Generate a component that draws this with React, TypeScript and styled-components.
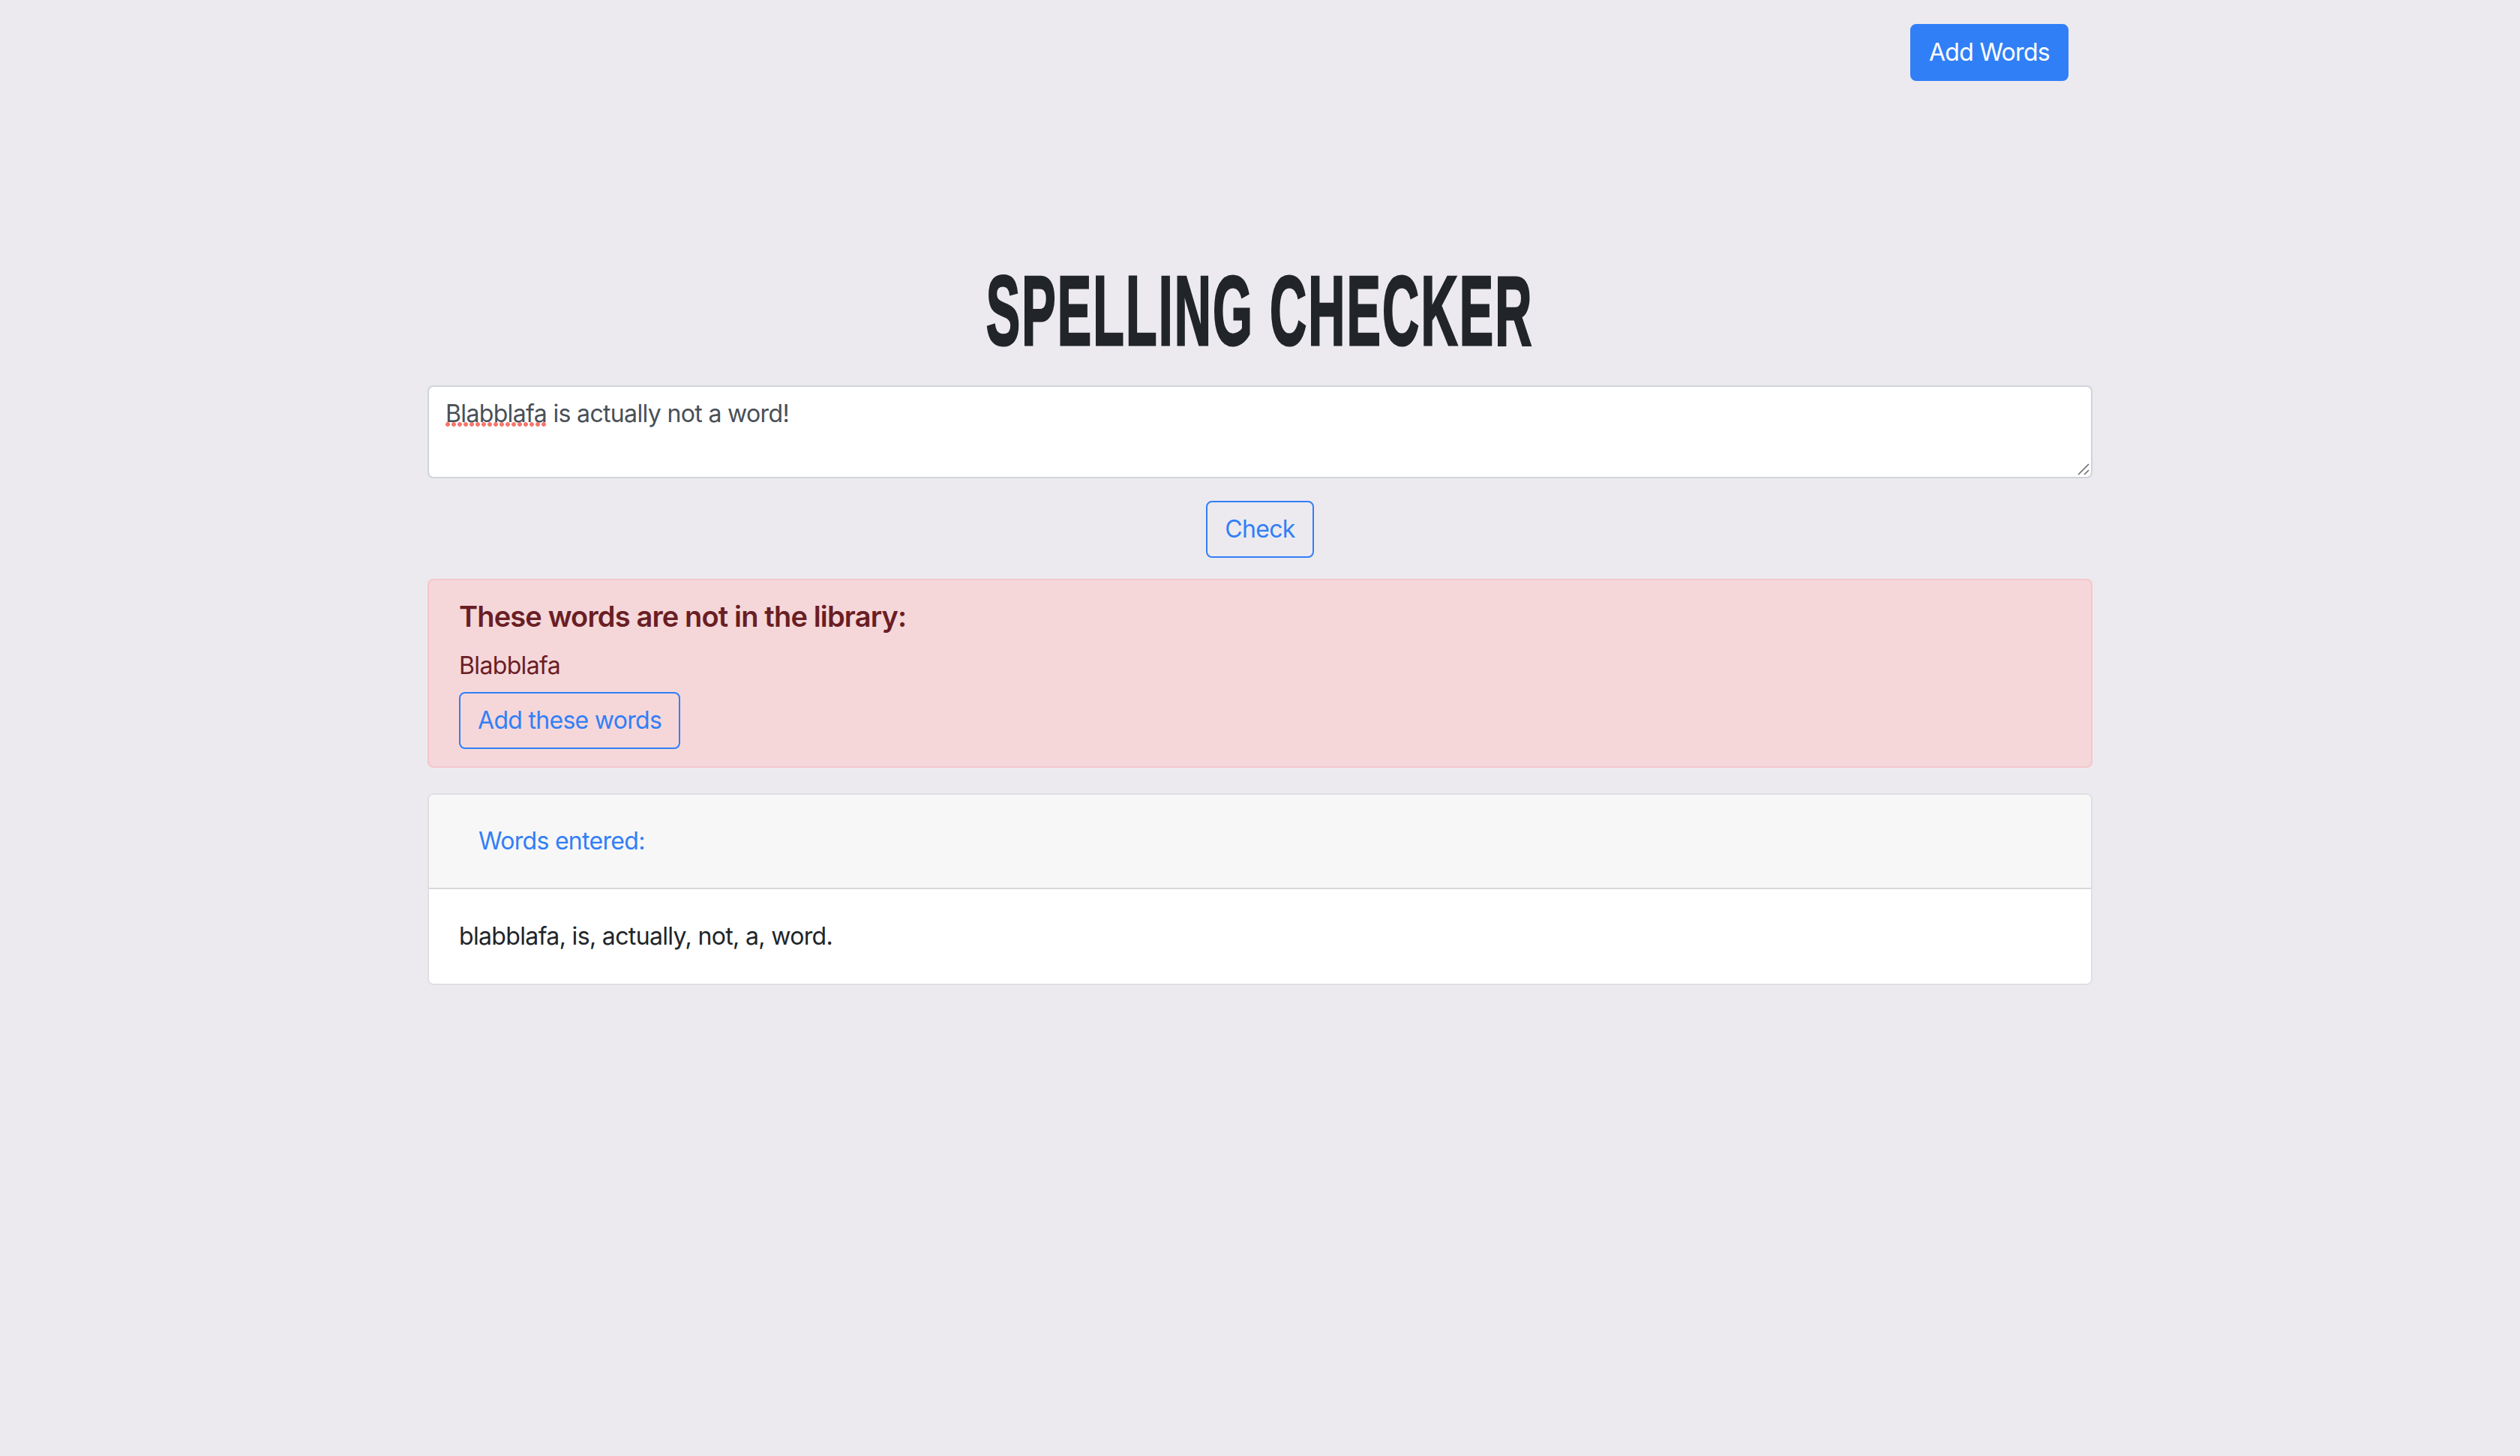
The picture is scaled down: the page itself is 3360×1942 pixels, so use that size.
import React from "react";
import styled, { createGlobalStyle } from "styled-components";

const Global = createGlobalStyle`
  html, body { margin: 0; padding: 0; }
  body { background: #eceaef; font-family: Inter, "Liberation Sans", sans-serif; font-size: 32px; line-height: 48px; color: #212529; min-height: 1942px; }
`;
const Page = styled.div`
  width: 2220px;
  margin: 0 auto;
  padding-top: 32px;
  display: flex;
  flex-direction: column;
`;
const TopBar = styled.header`
  display: flex;
  justify-content: flex-end;
  padding-right: 32px;
  margin-bottom: 250px;
`;
const Button = styled.button<{ $solid?: boolean }>`
  font: inherit;
  box-sizing: border-box;
  height: 76px;
  padding: 0 23px;
  border: 2px solid #317ff6;
  border-radius: 8px;
  background: ${(p) => (p.$solid ? "#317ff6" : "transparent")};
  color: ${(p) => (p.$solid ? "#fff" : "#317ff6")};
  letter-spacing: -0.7px;
  width: fit-content;
`;
const Title = styled.h1`
  margin: 0 0 42px;
  height: 114px;
  display: flex;
  justify-content: center;
  align-items: center;
`;
const TitleText = styled.span`
  display: inline-block;
  font-family: "Liberation Sans", sans-serif;
  font-weight: 700;
  font-size: 131px;
  line-height: 114px;
  color: #212529;
  white-space: nowrap;
  -webkit-text-stroke: 3px #212529;
  letter-spacing: 4px;
  transform: scaleX(0.52);
`;
const EditorWrap = styled.div`
  position: relative;
  display: flex;
`;
const Editor = styled.textarea`
  box-sizing: border-box;
  width: 100%;
  height: 124px;
  padding: 12px 22px;
  font: inherit;
  letter-spacing: -0.65px;
  color: #495057;
  background: #fff;
  border: 2px solid #ced4da;
  border-radius: 8px;
  outline: none;
  resize: none;
`;
const Squiggle = styled.span`
  position: absolute;
  left: 23px;
  top: 49px;
  width: 136px;
  height: 6px;
  background: radial-gradient(circle at 4px 3px, #f7766c 2.6px, transparent 3.2px) 0 0 / 8px 6px repeat-x;
`;
const ResizeGrip = styled.svg`
  position: absolute;
  right: 2px;
  bottom: 2px;
  width: 18px;
  height: 18px;
`;
const CheckRow = styled.div`
  display: flex;
  justify-content: center;
  margin: 30px 0 28px;
`;
const Alert = styled.section`
  box-sizing: border-box;
  height: 252px;
  padding: 24px 40px;
  background: #f5d7da;
  color: #6a1e24;
  border: 2px solid #f4c6cb;
  border-radius: 8px;
  margin-bottom: 34px;
`;
const AlertHeading = styled.h4`
  margin: 0 0 18px;
  font-size: 38px;
  line-height: 48px;
  font-weight: 600;
  letter-spacing: -0.85px;
`;
const AlertWords = styled.p`
  margin: 0 0 11px;
  letter-spacing: -0.65px;
`;
const Card = styled.section`
  background: #fff;
  border: 2px solid #dfdfe2;
  border-radius: 8px;
  overflow: hidden;
`;
const CardHeader = styled.div`
  box-sizing: border-box;
  height: 126px;
  padding: 0 66px;
  display: flex;
  align-items: center;
  background: #f7f7f7;
  border-bottom: 2px solid #d9d9dc;
  color: #317ff6;
  letter-spacing: -0.7px;
`;
const CardBody = styled.div`
  height: 126px;
  padding: 0 40px;
  display: flex;
  align-items: center;
  letter-spacing: -0.65px;
`;

export default function App() {
  return (
    <>
      <Global />
      <Page>
        <TopBar>
          <Button $solid>Add Words</Button>
        </TopBar>
        <Title>
          <TitleText>SPELLING CHECKER</TitleText>
        </Title>
        <EditorWrap>
          <Editor spellCheck={false} defaultValue="Blabblafa is actually not a word!" />
          <Squiggle />
          <ResizeGrip viewBox="0 0 18 18">
            <path d="M1 15 L15 1 M9 15 L15 9" stroke="#6b6b6b" strokeWidth="1.6" fill="none" />
          </ResizeGrip>
        </EditorWrap>
        <CheckRow>
          <Button>Check</Button>
        </CheckRow>
        <Alert>
          <AlertHeading>These words are not in the library:</AlertHeading>
          <AlertWords>Blabblafa</AlertWords>
          <Button>Add these words</Button>
        </Alert>
        <Card>
          <CardHeader>Words entered:</CardHeader>
          <CardBody>blabblafa, is, actually, not, a, word.</CardBody>
        </Card>
      </Page>
    </>
  );
}
